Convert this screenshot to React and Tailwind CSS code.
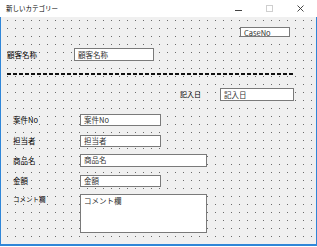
import React from 'react';

// WinForms designer surface: dotted grid, blue frame
const FIELDS = [
  { label: '案件No', text: '案件No', mt: 'mt-[13px]', w: 'w-[81px]', h: 'h-[12px]' },
  { label: '担当者', text: '担当者', mt: 'mt-[9px]', w: 'w-[81px]', h: 'h-[12px]' },
  { label: '商品名', text: '商品名', mt: 'mt-[7px]', w: 'w-[127px]', h: 'h-[13px]' },
  { label: '金額', text: '金額', mt: 'mt-[8px]', w: 'w-[81px]', h: 'h-[12px]' },
];

const TextBox = ({ text, className }) => (
  <div
    className={`border border-[#7a7a7a] bg-white pl-[3px] text-[7.5px] leading-[10px] text-[#333] ${className}`}
  >
    {text}
  </div>
);

const App = () => {
  return (
    <div className="w-[317px] h-[247px] bg-white flex flex-col pb-px font-['Noto_Sans_CJK_JP',sans-serif] text-black overflow-hidden">
      {/* Title bar */}
      <div className="h-[17px] flex items-center">
        <div className="flex-1 pl-[6px] text-[6.5px] leading-none">新しいカテゴリー</div>
        <div className="w-[31px] h-full flex items-center justify-center">
          <svg width="7" height="7" viewBox="0 0 7 7">
            <line x1="0" y1="5.5" x2="7" y2="5.5" stroke="#444" strokeWidth="1" />
          </svg>
        </div>
        <div className="w-[31px] h-full flex items-center justify-center">
          <svg width="7" height="7" viewBox="0 0 7 7">
            <rect x="0.5" y="0.5" width="6" height="6" fill="none" stroke="#cfcfcf" strokeWidth="1" />
          </svg>
        </div>
        <div className="w-[31px] h-full flex items-center justify-center mr-px">
          <svg width="7" height="7" viewBox="0 0 7 7">
            <path d="M0.5 0.5 L6.5 6.5 M6.5 0.5 L0.5 6.5" stroke="#333" strokeWidth="0.9" />
          </svg>
        </div>
      </div>

      {/* Form surface */}
      <div className="flex-1 flex flex-col border-x border-b-2 border-[#2f86d8] bg-[#f0f0f0] bg-[radial-gradient(circle_at_4.5px_4.5px,#6a6a6a_0.75px,transparent_0.9px)] [background-size:8px_8px] [background-position:2px_-1px]">
        {/* CaseNo */}
        <div className="flex justify-end pr-[26px] pt-[10px]">
          <TextBox text="CaseNo" className="w-[50px] h-[10px] leading-[8px]" />
        </div>

        {/* 顧客名称 */}
        <div className="flex items-center pl-[6px] mt-[11px]">
          <div className="w-[67px] text-[7.5px] leading-none">顧客名称</div>
          <TextBox text="顧客名称" className="w-[80px] h-[13px] pt-px" />
        </div>

        {/* separator */}
        <div className="ml-[6px] mt-[12px] w-[288px] h-[2px] bg-[repeating-linear-gradient(to_right,#111_0_4.5px,transparent_4.5px_6px)]" />

        {/* 記入日 */}
        <div className="flex items-center pl-[179px] mt-[13px]">
          <div className="w-[40px] text-[7px] leading-none">記入日</div>
          <TextBox text="記入日" className="w-[74px] h-[13px] pt-px" />
        </div>

        {FIELDS.map((f) => (
          <div key={f.label} className={`flex items-center pl-[12px] ${f.mt}`}>
            <div className="w-[67px] text-[7.5px] leading-none">{f.label}</div>
            <TextBox text={f.text} className={`${f.w} ${f.h}`} />
          </div>
        ))}

        {/* コメント欄 */}
        <div className="flex items-start pl-[12px] mt-[7px]">
          <div className="w-[67px] pt-[2px] text-[6.5px] leading-none">コメント欄</div>
          <TextBox text="コメント欄" className="w-[127px] h-[39px] pt-px" />
        </div>
      </div>
    </div>
  );
};

export default App;
